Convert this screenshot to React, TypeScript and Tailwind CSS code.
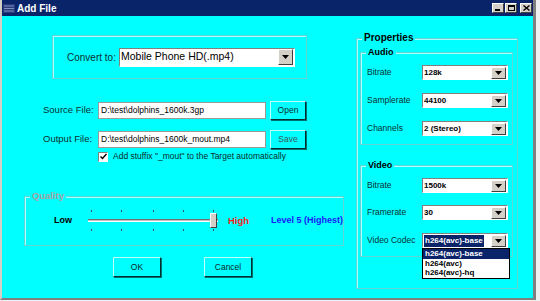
import React from "react";

const FONT = { fontFamily: '"Liberation Sans", Arial, sans-serif' };

// small down-arrow button used by every combo box
const ArrowBtn = ({ h }: { h: number }) => (
  <div
    className="flex items-center justify-center bg-[#d4d0c8] border border-t-white border-l-white border-r-[#404040] border-b-[#404040] w-[15px] shrink-0"
    style={{ height: h }}
  >
    <svg width="7" height="4" viewBox="0 0 7 4">
      <path d="M0 0h7L3.5 4z" fill="#000" />
    </svg>
  </div>
);

const Combo = ({
  value,
  w,
  h,
  bold,
  selected,
  big,
}: {
  value: string;
  w: number;
  h: number;
  bold?: boolean;
  selected?: boolean;
  big?: boolean;
}) => (
  <div
    className="flex items-center bg-white border border-t-[#808080] border-l-[#808080] border-r-white border-b-white pr-[1px] shrink-0"
    style={{ width: w, height: h }}
  >
    <div className="flex-1 flex items-center pl-[1px] overflow-hidden">
      <span
        className={
          "whitespace-nowrap " +
          (big ? "text-[10.5px] " : "text-[8px] ") +
          (bold ? "font-bold " : "") +
          (selected ? "bg-[#0a246a] text-white px-[1px]" : "text-black")
        }
      >
        {value}
      </span>
    </div>
    <ArrowBtn h={h - 3} />
  </div>
);

const Btn = ({ label, w, h, dim }: { label: string; w: number; h: number; dim?: boolean }) => (
  <div
    className={
      "flex items-center justify-center bg-[#00ffff] border border-t-[#c0ffff] border-l-[#c0ffff] border-r-[#003030] border-b-[#003030] shadow-[1px_1px_0_#007070] text-[8.5px] " +
      (dim ? "text-[#3a5a5a]" : "text-[#0a2a2a]")
    }
    style={{ width: w, height: h }}
  >
    {label}
  </div>
);

const Group = ({
  title,
  titleClass,
  className,
  children,
}: {
  title: string;
  titleClass: string;
  className: string;
  children?: React.ReactNode;
}) => (
  <div className={"relative border border-[#5fd6d6] shadow-[inset_1px_1px_0_#b0ffff] " + className}>
    <span className={"absolute -top-[7px] left-[5px] px-[2px] bg-[#00ffff] leading-[12px] whitespace-nowrap " + titleClass}>
      {title}
    </span>
    {children}
  </div>
);

const PropRow = ({ label, value, top }: { label: string; value: string; top: number }) => (
  <div className="flex items-center h-[15px]" style={{ marginTop: top }}>
    <span className="w-[61px] shrink-0 pl-[6px] text-[8.5px] text-[#0a3030] whitespace-nowrap">{label}</span>
    <Combo value={value} w={86} h={15} bold />
  </div>
);

export default function App() {
  const ticks = [3, 33, 65, 95, 125];
  return (
    <div className="w-[540px] h-[301px] bg-[#f0f0f0] overflow-hidden" style={FONT}>
      <div className="w-[536px] h-[300px] bg-[#00ffff] border-l-2 border-l-[#d4d0c8] border-r-[3px] border-r-[#808080] border-b-2 border-b-[#808080] flex flex-col">
        {/* title bar */}
        <div className="h-[16px] bg-[#0a246a] flex items-center shrink-0">
          <svg width="12" height="9" viewBox="0 0 12 9" className="ml-[1px]">
            <rect x="0" y="0" width="12" height="9" fill="#2a3a7a" />
            <path d="M1 2h10M1 4.5h10M1 7h10" stroke="#8090c0" strokeWidth="1" />
          </svg>
          <span className="ml-[2px] text-white font-bold text-[10px]">Add File</span>
          <div className="ml-auto flex items-center gap-[1px] mr-[1px]">
            {["min", "max", "close"].map((k) => (
              <div
                key={k}
                className={
                  "w-[12px] h-[10px] bg-[#d4d0c8] border border-t-white border-l-white border-r-[#404040] border-b-[#404040] flex items-center justify-center " +
                  (k === "close" ? "ml-[2px]" : "")
                }
              >
                {k === "min" && <div className="w-[5px] h-[2px] bg-black mt-[4px] -ml-[2px]" />}
                {k === "max" && <div className="w-[7px] h-[6px] border border-black border-t-2" />}
                {k === "close" && (
                  <svg width="7" height="6" viewBox="0 0 7 6">
                    <path d="M0.5 0.5l6 5M6.5 0.5l-6 5" stroke="#000" strokeWidth="1.4" />
                  </svg>
                )}
              </div>
            ))}
          </div>
        </div>

        <div className="flex flex-1">
          {/* left column */}
          <div className="w-[348px] flex flex-col shrink-0">
            <div className="ml-[50px] mt-[19px] w-[255px] h-[44px] border border-[#5fd6d6] shadow-[inset_1px_1px_0_#b0ffff] flex items-center pl-[14px]">
              <span className="text-[10px] text-[#0a3030] w-[52px] whitespace-nowrap">Convert to:</span>
              <Combo value="Mobile Phone HD(.mp4)" w={176} h={19} big />
            </div>

            <div className="flex items-center h-[19px] mt-[22px] ml-[41px]">
              <span className="w-[55px] text-[9.5px] text-[#0a3030]">Source File:</span>
              <div className="w-[168px] h-[17px] bg-white border border-[#9a9a9a] flex items-center pl-[2px] text-[8.5px] text-black">
                D:\test\dolphins_1600k.3gp
              </div>
              <div className="ml-[4px]">
                <Btn label="Open" w={36} h={19} />
              </div>
            </div>

            <div className="flex items-center h-[19px] mt-[10px] ml-[41px]">
              <span className="w-[55px] text-[9.5px] text-[#0a3030]">Output File:</span>
              <div className="w-[168px] h-[17px] bg-white border border-[#9a9a9a] flex items-center pl-[2px] text-[8.5px] text-black">
                D:\test\dolphins_1600k_mout.mp4
              </div>
              <div className="ml-[4px]">
                <Btn label="Save" w={36} h={19} dim />
              </div>
            </div>

            <div className="flex items-center h-[11px] mt-[2px] ml-[96px]">
              <div className="w-[10px] h-[10px] bg-white border border-t-[#808080] border-l-[#808080] border-r-white border-b-white flex items-center justify-center">
                <svg width="7" height="7" viewBox="0 0 7 7">
                  <path d="M0.5 3.5l2 2 4-4.5" stroke="#000" strokeWidth="1.5" fill="none" />
                </svg>
              </div>
              <span className="ml-[5px] text-[8.5px] text-[#0a2a2a]">
                Add stuffix "_mout" to the Target automatically
              </span>
            </div>

            <Group title="Quality" titleClass="text-[9.5px] font-bold text-[#a8a2a2]" className="mt-[34px] ml-[22px] w-[320px] h-[50px]">
              <div className="flex items-center h-[22px] mt-[13px] ml-[29px]">
                <span className="w-[34px] shrink-0 text-[9px] font-bold text-black">Low</span>
                <div className="relative w-[134px] h-[22px] shrink-0">
                  {ticks.map((x) => (
                    <React.Fragment key={x}>
                      <div className="absolute top-[0px] w-[1px] h-[2px] bg-[#206060]" style={{ left: x }} />
                      <div className="absolute top-[19px] w-[1px] h-[2px] bg-[#206060]" style={{ left: x }} />
                    </React.Fragment>
                  ))}
                  <div className="absolute left-[0px] top-[9px] w-[130px] h-[3px] border-t border-t-[#707070] border-b border-b-white bg-[#c0c0c0]" />
                  <div className="absolute left-[122px] top-[3px] w-[7px] h-[15px] bg-[#d4d0c8] border border-t-white border-l-white border-r-[#404040] border-b-[#404040]" />
                </div>
                <span className="ml-[6px] w-[43px] shrink-0 text-[9.5px] font-bold text-[#ff1a1a]">High</span>
                <span className="text-[9px] font-bold text-[#1a1aff] whitespace-nowrap">Level 5 (Highest)</span>
              </div>
            </Group>

            <div className="flex mt-[11px] ml-[111px]">
              <Btn label="OK" w={48} h={20} />
              <div className="ml-[43px]">
                <Btn label="Cancel" w={48} h={20} />
              </div>
            </div>
          </div>

          {/* right column */}
          <Group title="Properties" titleClass="text-[10px] font-bold text-black" className="ml-[6px] mt-[22px] w-[162px] h-[251px]">
            <Group title="Audio" titleClass="text-[9px] font-bold text-black" className="ml-[3px] mt-[13px] w-[153px] h-[93px]">
              <PropRow label="Bitrate" value="128k" top={12} />
              <PropRow label="Samplerate" value="44100" top={13} />
              <PropRow label="Channels" value="2 (Stereo)" top={13} />
            </Group>
            <Group title="Video" titleClass="text-[9px] font-bold text-black" className="ml-[3px] mt-[20px] w-[153px] h-[92px]">
              <PropRow label="Bitrate" value="1500k" top={12} />
              <PropRow label="Framerate" value="30" top={12} />
              <div className="relative flex items-center h-[15px] mt-[13px]">
                <span className="w-[61px] shrink-0 pl-[6px] text-[8.5px] text-[#0a3030] whitespace-nowrap">Video Codec</span>
                <Combo value="h264(avc)-base" w={86} h={15} bold selected />
                {/* open dropdown list */}
                <div className="absolute left-[61px] top-[15px] w-[88px] bg-white border border-black flex flex-col z-10 text-[8px] font-bold leading-[9.5px]">
                  <span className="bg-[#0a246a] text-white pl-[2px]">h264(avc)-base</span>
                  <span className="text-black pl-[2px]">h264(avc)</span>
                  <span className="text-black pl-[2px]">h264(avc)-hq</span>
                </div>
              </div>
            </Group>
          </Group>
        </div>
      </div>
    </div>
  );
}
